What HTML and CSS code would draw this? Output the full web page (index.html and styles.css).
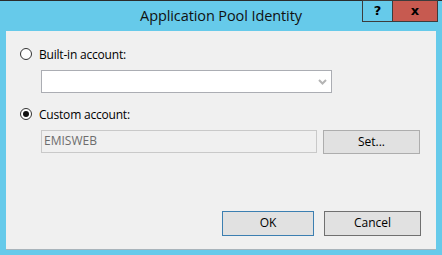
FILE: index.html
```html
<!DOCTYPE html>
<html>
<head>
<meta charset="utf-8">
<title>Application Pool Identity</title>
<link rel="stylesheet" href="styles.css">
</head>
<body>
<div class="window">
  <div class="titlebar">
    <span class="title">Application Pool Identity</span>
    <div class="caption">
      <span class="help">?</span>
      <span class="close">x</span>
    </div>
  </div>
  <div class="content">
    <div class="option">
      <span class="radio"></span>
      <span class="label">Built-in account:</span>
    </div>
    <div class="combo">
      <svg class="chevron" width="9" height="6" viewBox="0 0 9 6">
        <path d="M1 1 L4.5 4.5 L8 1" fill="none" stroke="#b4b4b4" stroke-width="2"/>
      </svg>
    </div>
    <div class="option second">
      <span class="radio checked"></span>
      <span class="label">Custom account:</span>
    </div>
    <div class="account">
      <div class="textbox">EMISWEB</div>
      <div class="button set">Set...</div>
    </div>
    <div class="footer">
      <div class="button ok">OK</div>
      <div class="button cancel">Cancel</div>
    </div>
  </div>
</div>
</body>
</html>
```

FILE: styles.css
```css
*{
  margin:0;
  padding:0;
  box-sizing:border-box;
}
body{
  font-family:"Open Sans", "Noto Sans", sans-serif;
  background:#66caea;
}
.window{
  width:442px;
  height:255px;
  background:#66caea;
  border-top:1px solid #2b2b2b;
}
.titlebar{
  height:30px;
  display:flex;
  justify-content:center;
  position:relative;
}
.title{
  font-size:14.5px;
  color:#111;
  margin-top:5px;
  letter-spacing:-0.1px;
}
.caption{
  position:absolute;
  top:-1px;
  right:4px;
  display:flex;
}
.help, .close{
  height:22px;
  border:1px solid #3c3c3c;
  font-family:"DejaVu Sans", sans-serif;
  font-weight:bold;
  font-size:13px;
  text-align:center;
  line-height:19px;
  color:#000;
}
.help{
  width:30px;
  background:#66caea;
  border-right:none;
}
.close{
  width:46px;
  background:#c75a50;
}
.content{
  margin:0 6px;
  height:219px;
  background:#f0f0f0;
  border-bottom:1px solid #a9b4bb;
  padding:16px 0 0 14px;
  font-size:12px;
  color:#000;
}
.option{
  display:flex;
  align-items:center;
  height:14px;
}
.option.second{
  margin-top:14px;
}
.radio{
  width:12px;
  height:12px;
  border:1px solid #333;
  border-radius:50%;
  background:#fff;
  margin-right:7px;
  display:flex;
  align-items:center;
  justify-content:center;
}
.radio.checked::after{
  content:"";
  width:6px;
  height:6px;
  border-radius:50%;
  background:#111;
}
.label{
  letter-spacing:-0.2px;
}
.combo{
  margin:9px 0 0 21px;
  width:291px;
  height:23px;
  background:#fff;
  border:1px solid #abadb3;
  display:flex;
  justify-content:flex-end;
  align-items:center;
  padding-right:4px;
}
.account{
  display:flex;
  margin:9px 0 0 21px;
  gap:6px;
}
.textbox{
  width:276px;
  height:23px;
  border:1px solid #c9c9c9;
  background:#f0f0f0;
  color:#6d6d6d;
  padding-left:2px;
  line-height:20px;
}
.button{
  height:24px;
  background:#e1e1e1;
  border:1px solid #adadad;
  text-align:center;
  line-height:21px;
}
.set{
  width:97px;
}
.footer{
  display:flex;
  justify-content:flex-end;
  gap:10px;
  margin-top:57px;
  padding-right:15px;
}
.ok{
  width:92px;
  height:25px;
  border-color:#3c7fb1;
}
.cancel{
  width:97px;
  height:25px;
  border-color:#707070;
}
```
